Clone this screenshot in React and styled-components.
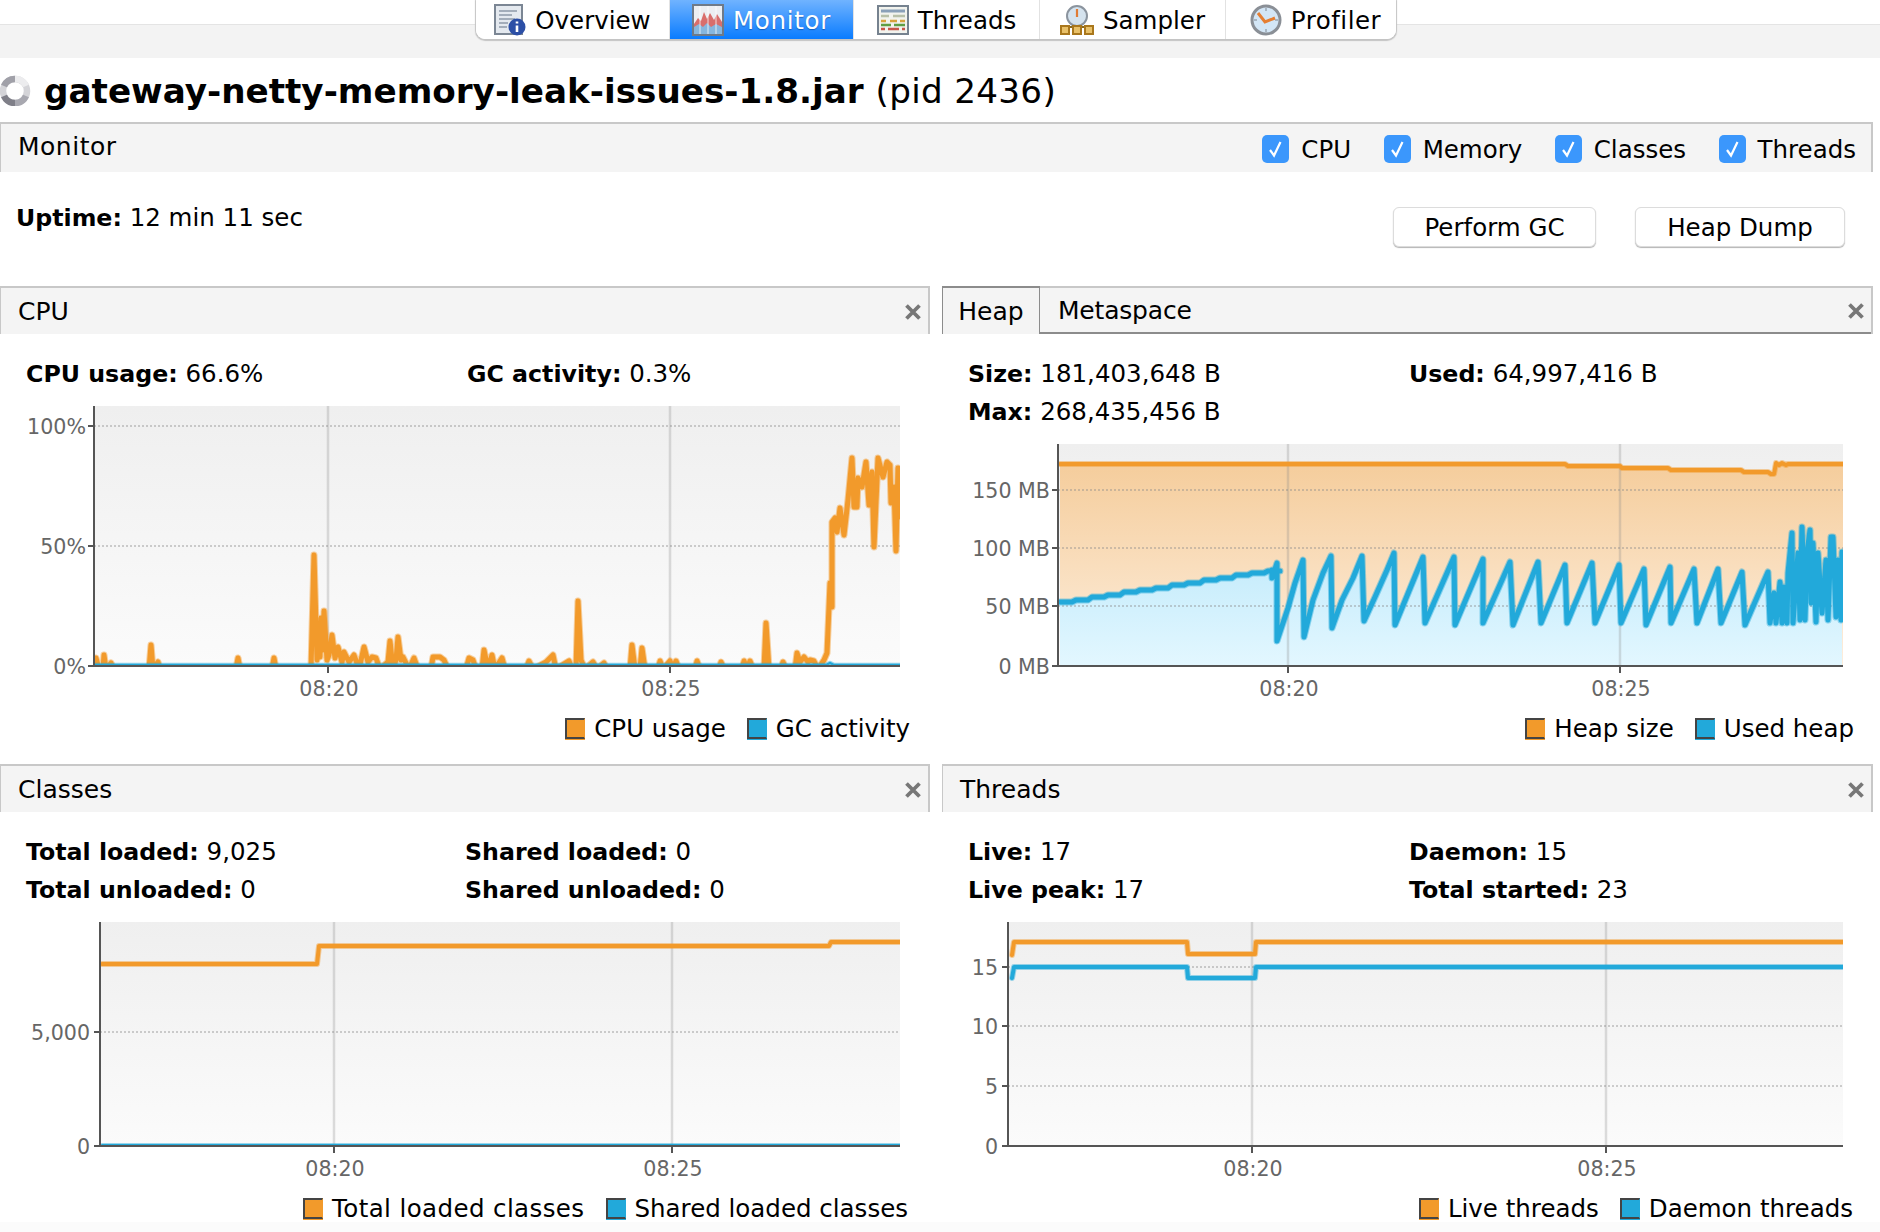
import React from 'react';
import styled, { createGlobalStyle } from 'styled-components';

const ORANGE = '#f29a2b';
const BLUE = '#22a9da';
const FONT = '"DejaVu Sans", "Liberation Sans", sans-serif';

const GlobalStyle = createGlobalStyle`
  html, body {
    margin: 0;
    padding: 0;
    background: #fff;
  }
  body {
    font-family: ${FONT};
    color: #000;
  }
`;

const Page = styled.div`
  width: 1880px;
  height: 1232px;
  overflow: hidden;
  background: linear-gradient(#fff 1222px, #fbfbfb 1222px);
`;

const TabStrip = styled.div`
  height: 58px;
  padding-left: 476px;
  box-sizing: border-box;
  background: linear-gradient(#fff 24px, #e4e4e4 24px, #e4e4e4 25px, #f3f3f3 25px);
`;

const TabGroup = styled.div`
  display: inline-flex;
  height: 39px;
  background: #fff;
  border-radius: 0 0 9px 9px;
  box-shadow: 0 1px 1px 1px #c4c4c4;
  overflow: hidden;
`;

const Tab = styled.div`
  width: ${(p) => p.$width}px;
  display: flex;
  align-items: center;
  justify-content: center;
  gap: 9px;
  font-size: 24.5px;
  letter-spacing: ${(p) => p.$spacing || 0}px;
  padding-left: ${(p) => p.$pad || 0}px;
  box-sizing: border-box;
  border-right: 1px solid ${(p) => (p.$last ? 'transparent' : '#e2e2e2')};
  color: ${(p) => (p.$active ? '#fff' : '#000')};
  background: ${(p) => (p.$active ? 'linear-gradient(#70b3ff, #0a7cff)' : '#fff')};
  text-shadow: ${(p) => (p.$active ? '0 1px 1px rgba(0,50,120,.5)' : 'none')};
`;

const TabLabel = styled.span`
  position: relative;
  top: 1px;
`;

const TitleRow = styled.div`
  height: 64px;
  display: flex;
  align-items: center;
  gap: 12px;
`;

const Title = styled.h1`
  margin: 0;
  font-size: 34.2px;
  font-weight: 700;
  white-space: pre;
  position: relative;
  top: 1px;

  span {
    font-weight: 400;
    letter-spacing: 0.3px;
  }
`;

const Content = styled.div`
  width: 1873px;
`;

const SectionBar = styled.div`
  height: ${(p) => p.$height || 48}px;
  box-sizing: border-box;
  display: flex;
  align-items: center;
  justify-content: space-between;
  padding-left: 17px;
  background: #f4f4f4;
  border-top: 2px solid #c8c8c8;
  border-left: 1px solid #c8c8c8;
  border-right: 2px solid #c8c8c8;
  font-size: 25px;
`;

const MonitorTitle = styled.span`
  letter-spacing: 0.5px;
  position: relative;
  top: -2px;
`;

const Toggles = styled.div`
  display: flex;
  align-items: center;
  padding-right: 15px;
  padding-top: 2px;
`;

const Toggle = styled.label`
  display: flex;
  align-items: center;
  gap: 12px;
  margin-left: 32.5px;
  font-size: 24.5px;
`;

const CheckBox = styled.span`
  width: 27px;
  height: 28px;
  border-radius: 5px;
  background: #3b97fc;
  display: flex;
  align-items: center;
  justify-content: center;
`;

const Actions = styled.div`
  height: 114px;
  display: flex;
  justify-content: space-between;
  padding: 34px 28px 0 16px;
  box-sizing: border-box;
`;

const Uptime = styled.div`
  font-size: 24.5px;
  line-height: 24px;

  b {
    font-weight: 700;
    font-size: 23.7px;
  }
`;

const Buttons = styled.div`
  display: flex;
  gap: 39px;
  height: 40px;
  margin-top: 1px;
`;

const Button = styled.button`
  width: ${(p) => p.$width}px;
  height: 40px;
  padding: 0;
  font-family: ${FONT};
  font-size: 24.5px;
  color: #000;
  background: #fff;
  border: 1px solid #dcdcdc;
  border-radius: 6px;
  box-shadow: 0 1px 1px #b4b4b4;
`;

const PanelGrid = styled.div`
  display: grid;
  grid-template-columns: 930px 931px;
  grid-template-rows: 478px 468px;
  column-gap: 12px;
`;

const Panel = styled.section`
  display: flex;
  flex-direction: column;
`;

const PanelTitle = styled.span``;

const PanelTabs = styled.div`
  display: flex;
  align-items: stretch;
  align-self: stretch;
  flex: 1;
  margin: -2px 0 0 -18px;
`;

const ActiveTab = styled.div`
  width: 98px;
  display: flex;
  align-items: center;
  justify-content: center;
  box-sizing: border-box;
  border: 1px solid #8c8c8c;
  border-top-width: 2px;
  border-bottom: none;
`;

const IdleTab = styled.div`
  flex: 1;
  display: flex;
  align-items: center;
  justify-content: space-between;
  padding: 2px 0 0 18px;
  border-bottom: 2px solid #8c8c8c;
  letter-spacing: -0.2px;
`;

const CloseButton = styled.span`
  display: flex;
  width: 18px;
  height: 18px;
  margin: 2px 6px 0 0;
  flex: none;
`;

const Stats = styled.div`
  display: grid;
  grid-template-columns: ${(p) => p.$column || 441}px auto;
  grid-auto-rows: 38px;
  align-items: center;
  padding: 20px 0 0 26px;
  font-size: 24.5px;

  b {
    font-weight: 700;
    font-size: 23.7px;
  }
`;

const Legend = styled.div`
  height: 44px;
  display: flex;
  align-items: center;
  justify-content: flex-end;
  padding-right: ${(p) => p.$right}px;
  font-size: 24.5px;
`;

const LegendItem = styled.span`
  display: flex;
  align-items: center;
  gap: 9px;
  margin-left: 21px;
  letter-spacing: ${(p) => p.$spacing || 0}px;
`;

const Swatch = styled.i`
  width: 20px;
  height: 21px;
  box-sizing: border-box;
  background: ${(p) => p.$color};
  border: 2px solid #444;
  border-right: 1px solid ${(p) => p.$color};
  box-shadow: 0 1px 0 ${(p) => p.$color};
`;

const ChartFrame = styled.svg`
  display: block;
  flex: none;

  text {
    font-family: ${FONT};
    font-size: 20.6px;
    fill: #666;
  }
`;

const toPath = (pts) => pts.map((p, i) => `${i ? 'L' : 'M'}${p[0]} ${p[1]}`).join(' ');

const toArea = (pts, base) =>
  `${toPath(pts)} L${pts[pts.length - 1][0]} ${base} L${pts[0][0]} ${base} Z`;

// 664 is the idle level of the trace, it sits behind the GC line and the axis
const cpuPoints = [
  [95, 664], [96, 658], [99, 664], [103, 664], [104, 655], [106, 664], [111, 663], [114, 664],
  [149, 664], [151, 645], [153, 664], [158, 662], [160, 664], [236, 664], [238, 658], [240, 664],
  [272, 664], [274, 658], [276, 664], [311, 664], [314, 555], [317, 660], [319, 640], [320, 657],
  [321, 618], [323, 650], [324, 611], [327, 660], [329, 655], [332, 635], [335, 658], [338, 647],
  [342, 662], [344, 652], [349, 662], [354, 655], [359, 664], [364, 647], [368, 662], [372, 657],
  [376, 658], [380, 664], [388, 662], [390, 641], [393, 664], [396, 660], [398, 637], [401, 660],
  [403, 657], [409, 664], [414, 658], [418, 664], [423, 664], [431, 664], [433, 657], [440, 657],
  [444, 660], [448, 664], [466, 664], [469, 658], [473, 660], [476, 664], [482, 664], [484, 650],
  [488, 664], [492, 655], [495, 664], [502, 658], [505, 664], [526, 664], [529, 661], [533, 664],
  [546, 662], [550, 658], [553, 655], [556, 664], [569, 661], [572, 664], [576, 664], [578, 601],
  [581, 660], [585, 664], [593, 662], [597, 664], [604, 663], [607, 664], [614, 664], [630, 664],
  [632, 645], [635, 664], [640, 664], [642, 648], [645, 664], [658, 664], [660, 661], [663, 664],
  [670, 661], [673, 664], [676, 661], [679, 664], [695, 664], [697, 661], [700, 664], [719, 664],
  [721, 662], [724, 664], [742, 664], [744, 661], [747, 664], [750, 661], [753, 664], [762, 664],
  [764, 664], [766, 623], [769, 664], [781, 664], [783, 662], [786, 664], [795, 664], [797, 653],
  [800, 662], [804, 657], [808, 662], [810, 660], [814, 661], [818, 664], [824, 660], [827, 653],
  [830, 583], [832, 607], [832, 522], [835, 518], [837, 532], [840, 508], [844, 535], [848, 500],
  [852, 458], [854, 507], [857, 507], [858, 478], [862, 487], [866, 462], [869, 505], [872, 472],
  [874, 547], [878, 458], [883, 477], [887, 462], [890, 465], [891, 503], [894, 487], [896, 551],
  [898, 468], [899, 517],
].map(([x, y]) => [x, y === 664 ? 669 : y]);

const gcPoints = [[94, 665], [826, 665], [830, 663], [834, 665], [900, 665]];

const heapSizePoints = [
  [1060, 464], [1565, 464], [1568, 466], [1620, 466], [1622, 468], [1668, 468], [1671, 470],
  [1741, 470], [1744, 472], [1768, 472], [1771, 474], [1774, 474], [1776, 463], [1779, 465],
  [1782, 463], [1786, 465], [1788, 464], [1843, 464],
];

const teeth = [
  [1277, 641], [1288, 608], [1295, 583], [1303, 560], [1304, 637], [1313, 600], [1323, 573],
  [1331, 556], [1332, 628], [1342, 600], [1353, 578], [1362, 556], [1364, 621], [1375, 597],
  [1387, 570], [1394, 553], [1395, 625], [1423, 557], [1425, 623], [1454, 557], [1455, 625],
  [1483, 559], [1483, 623], [1510, 562], [1513, 625], [1538, 562], [1541, 623], [1565, 565],
  [1567, 623], [1592, 563], [1595, 623], [1619, 565], [1621, 623], [1644, 569], [1646, 625],
  [1670, 567], [1671, 623], [1694, 569], [1697, 623], [1718, 569], [1721, 623], [1742, 572],
  [1745, 625], [1768, 572], [1770, 623], [1774, 593], [1776, 623], [1780, 582], [1782, 623],
  [1784, 587], [1787, 623], [1788, 573], [1792, 533], [1793, 623], [1798, 553], [1800, 620],
  [1802, 527], [1805, 620], [1807, 553], [1810, 530], [1811, 603], [1813, 543], [1816, 622],
  [1818, 553], [1822, 613], [1826, 560], [1828, 620], [1831, 537], [1833, 537], [1836, 617],
  [1838, 560], [1841, 620], [1842, 552],
];

const ramp = [];
for (let x = 1060; x < 1270; x += 16) {
  const y = Math.round(602 - ((x - 1060) * 32) / 212);
  ramp.push([x, y], [x + 12, y]);
}

const usedHeapPoints = [...ramp, [1272, 570], [1272, 578], [1277, 563], ...teeth];

const PlotGradient = ({ id, top, bottom, from, to }) => (
  <linearGradient id={id} gradientUnits="userSpaceOnUse" x1="0" x2="0" y1={top} y2={bottom}>
    <stop offset="0" stopColor={from} />
    <stop offset="1" stopColor={to} />
  </linearGradient>
);

const Series = ({ points, color, width = 4 }) => (
  <g fill="none" strokeLinejoin="round" strokeLinecap="round">
    <path d={toPath(points)} stroke={color} strokeOpacity=".45" strokeWidth={width + 2} />
    <path d={toPath(points)} stroke={color} strokeWidth={width} />
  </g>
);

// coordinates are page coordinates, the viewBox moves them into the panel
const Chart = ({ id, originX, originY, height, plot, yTicks, xTicks, labelY, labelRight, under, children }) => (
  <ChartFrame
    width="930"
    height={height}
    viewBox={`${originX} ${originY} 930 ${height}`}
  >
    <defs>
      <PlotGradient id={`${id}-bg`} top={plot.top} bottom={plot.bottom} from="#efefef" to="#fbfbfb" />
      <clipPath id={`${id}-clip`}>
        <rect x={plot.left} y={plot.top} width={plot.right - plot.left} height={plot.bottom - plot.top + 1} />
      </clipPath>
    </defs>
    <rect x={plot.left} y={plot.top} width={plot.right - plot.left} height={plot.bottom - plot.top} fill={`url(#${id}-bg)`} />
    <g clipPath={`url(#${id}-clip)`}>
      {under}
      {yTicks.map((t) => (
        <line key={t.label} x1={plot.left} x2={plot.right} y1={t.y} y2={t.y} stroke="#8a8a8a" strokeOpacity=".4" strokeWidth="2" strokeDasharray="2 2" />
      ))}
      {xTicks.map((t) => (
        <line key={t.label} x1={t.x} x2={t.x} y1={plot.top} y2={plot.bottom} stroke="#8a8a8a" strokeOpacity=".28" strokeWidth="2.5" />
      ))}
      {children}
    </g>
    <path
      d={`M${plot.left} ${plot.top} V${plot.bottom} H${plot.right}`}
      fill="none"
      stroke="#555"
      strokeWidth="2"
    />
    {yTicks.map((t) => (
      <g key={t.label}>
        <line x1={plot.left - 6} x2={plot.left} y1={t.y} y2={t.y} stroke="#555" strokeWidth="2" />
        <text x={labelRight} y={t.y + 8} textAnchor="end">{t.label}</text>
      </g>
    ))}
    {xTicks.map((t) => (
      <g key={t.label}>
        <line x1={t.x} x2={t.x} y1={plot.bottom} y2={plot.bottom + 7} stroke="#555" strokeWidth="2" />
        <text x={t.x + 1} y={labelY} textAnchor="middle">{t.label}</text>
      </g>
    ))}
  </ChartFrame>
);

const CloseIcon = () => (
  <CloseButton>
    <svg width="18" height="18" viewBox="0 0 18 18">
      <path d="M2.5 2.5 L15.5 15.5 M15.5 2.5 L2.5 15.5" stroke="#777" strokeWidth="3.8" />
    </svg>
  </CloseButton>
);

const CheckMark = () => (
  <svg width="15" height="18" viewBox="0 0 15 18">
    <path d="M2 10 L6 15.5 L12.5 2" fill="none" stroke="#fff" strokeWidth="2.2" />
  </svg>
);

const Spinner = () => (
  <svg width="32" height="32" viewBox="0 0 32 32" fill="none" strokeWidth="6.5">
    <circle cx="15" cy="17" r="12" stroke="#d4d4d8" />
    <path d="M4 22 A12 12 0 0 0 15 29" stroke="#7f7f88" />
    <path d="M15 29 A12 12 0 0 0 26 22" stroke="#a8a8b0" />
    <path d="M4 12 A12 12 0 0 1 15 5" stroke="#a0a0a8" />
    <path d="M15 5 A12 12 0 0 1 26 12" stroke="#ececee" />
  </svg>
);

const OverviewIcon = () => (
  <svg width="32" height="32" viewBox="0 0 32 32">
    <rect x="1" y="1" width="27" height="29" fill="#e4e9ef" stroke="#7b8694" strokeWidth="2" />
    <path d="M5 7 H23 M5 11 H18 M5 15 H21 M5 19 H14 M5 23 H13" stroke="#a3adba" strokeWidth="2" />
    <circle cx="23" cy="23" r="8.5" fill="#2c4fa6" />
    <path d="M23 21.5 V28 M23 17.5 V19.5" stroke="#fff" strokeWidth="2.6" />
  </svg>
);

const MonitorIcon = () => (
  <svg width="32" height="32" viewBox="0 0 32 32">
    <rect x="1" y="1" width="30" height="30" fill="#eceef2" stroke="#6f7a88" strokeWidth="2" />
    <path d="M2 20 L6 14 L9 17 L12 8 L15 15 L18 9 L22 16 L25 10 L30 18 V23 H2 Z" fill="#d96e6c" />
    <path d="M2 23 L7 20 L11 23 L15 19 L19 23 L24 20 L30 23 V30 H2 Z" fill="#86b6de" />
    <path d="M8 2 V30 M16 2 V30 M24 2 V30" stroke="#fff" strokeOpacity=".5" strokeWidth="1.5" />
  </svg>
);

const ThreadsIcon = () => (
  <svg width="32" height="30" viewBox="0 0 32 30">
    <rect x="1" y="1" width="30" height="28" fill="#f2f3ee" stroke="#76828f" strokeWidth="2" />
    <path d="M4 6 H28" stroke="#8aa0b8" strokeWidth="3" />
    <path d="M4 11 H12 M16 11 H28" stroke="#b8c0a8" strokeWidth="2.5" />
    <path d="M4 16 H9 M13 16 H20 M23 16 H28" stroke="#d8a33c" strokeWidth="2.5" />
    <path d="M4 20 H14 M17 20 H28" stroke="#5f9e45" strokeWidth="2.5" />
    <path d="M4 24 H8 M11 24 H22 M25 24 H28" stroke="#c8574a" strokeWidth="2.5" />
  </svg>
);

const SamplerIcon = () => (
  <svg width="34" height="30" viewBox="0 0 34 30">
    <circle cx="17" cy="11" r="10" fill="#d5e3ee" stroke="#8b949e" strokeWidth="2" />
    <path d="M17 4 V12" stroke="#e07b35" strokeWidth="2.2" />
    <path d="M5 22 H29" stroke="#8a6a20" strokeWidth="2" />
    <g fill="#e8c068" stroke="#a9771c" strokeWidth="2">
      <rect x="1" y="21" width="8" height="8" />
      <rect x="13" y="21" width="8" height="8" />
      <rect x="25" y="21" width="8" height="8" />
    </g>
  </svg>
);

const ProfilerIcon = () => (
  <svg width="32" height="32" viewBox="0 0 32 32">
    <circle cx="16" cy="16" r="14" fill="#d3e6f6" stroke="#8a8f96" strokeWidth="3" />
    <path d="M8 9 L15 18 L25 14" fill="none" stroke="#e57f33" strokeWidth="3" />
    <path d="M16 4 V7 M16 25 V28 M4 16 H7 M25 16 H28" stroke="#9aa7b3" strokeWidth="1.5" />
  </svg>
);

const tabs = [
  { label: 'Overview', width: 194, Icon: OverviewIcon },
  { label: 'Monitor', width: 184, Icon: MonitorIcon, active: true, spacing: 0.7 },
  { label: 'Threads', width: 186, Icon: ThreadsIcon },
  { label: 'Sampler', width: 186, Icon: SamplerIcon },
  { label: 'Profiler', width: 170, Icon: ProfilerIcon, spacing: 0.5, pad: 10 },
];

const Stat = ({ name, value }) => (
  <span>
    <b>{name}:</b> {value}
  </span>
);

const LegendRow = ({ first, second, right, spacing }) => (
  <Legend $right={right}>
    <LegendItem $spacing={spacing}><Swatch $color={ORANGE} />{first}</LegendItem>
    <LegendItem><Swatch $color={BLUE} />{second}</LegendItem>
  </Legend>
);

const App = () => (
  <Page>
    <GlobalStyle />
    <TabStrip>
      <TabGroup>
        {tabs.map(({ label, width, Icon, active, spacing, pad }, i) => (
          <Tab key={label} $width={width} $active={active} $spacing={spacing} $pad={pad} $last={i === tabs.length - 1}>
            <Icon />
            <TabLabel>{label}</TabLabel>
          </Tab>
        ))}
      </TabGroup>
    </TabStrip>

    <TitleRow>
      <Spinner />
      <Title>gateway-netty-memory-leak-issues-1.8.jar <span>(pid 2436)</span></Title>
    </TitleRow>

    <Content>
      <SectionBar $height={50}>
        <MonitorTitle>Monitor</MonitorTitle>
        <Toggles>
          {['CPU', 'Memory', 'Classes', 'Threads'].map((name) => (
            <Toggle key={name}>
              <CheckBox><CheckMark /></CheckBox>
              {name}
            </Toggle>
          ))}
        </Toggles>
      </SectionBar>

      <Actions>
        <Uptime><b>Uptime:</b> 12 min 11 sec</Uptime>
        <Buttons>
          <Button $width={203}>Perform GC</Button>
          <Button $width={210}>Heap Dump</Button>
        </Buttons>
      </Actions>

      <PanelGrid>
        <Panel>
          <SectionBar>
            <PanelTitle>CPU</PanelTitle>
            <CloseIcon />
          </SectionBar>
          <Stats>
            <Stat name="CPU usage" value="66.6%" />
            <Stat name="GC activity" value="0.3%" />
          </Stats>
          <Chart
            id="cpu"
            originX={0}
            originY={392}
            height={314}
            plot={{ left: 94, right: 900, top: 406, bottom: 666 }}
            yTicks={[{ y: 426, label: '100%' }, { y: 546, label: '50%' }, { y: 666, label: '0%' }]}
            xTicks={[{ x: 328, label: '08:20' }, { x: 670, label: '08:25' }]}
            labelY={696}
            labelRight={86}
          >
            <Series points={cpuPoints} color={ORANGE} width={5} />
            <Series points={gcPoints} color={BLUE} width={2.5} />
          </Chart>
          <LegendRow first="CPU usage" second="GC activity" right={20} />
        </Panel>

        <Panel>
          <SectionBar>
            <PanelTabs>
              <ActiveTab>Heap</ActiveTab>
              <IdleTab>
                Metaspace
                <CloseIcon />
              </IdleTab>
            </PanelTabs>
          </SectionBar>
          <Stats>
            <Stat name="Size" value="181,403,648 B" />
            <Stat name="Used" value="64,997,416 B" />
            <Stat name="Max" value="268,435,456 B" />
          </Stats>
          <Chart
            id="heap"
            originX={942}
            originY={430}
            height={276}
            plot={{ left: 1058, right: 1843, top: 444, bottom: 666 }}
            yTicks={[
              { y: 490, label: '150 MB' },
              { y: 548, label: '100 MB' },
              { y: 606, label: '50 MB' },
              { y: 666, label: '0 MB' },
            ]}
            xTicks={[{ x: 1288, label: '08:20' }, { x: 1620, label: '08:25' }]}
            labelY={696}
            labelRight={1050}
            under={
              <>
                <defs>
                  <PlotGradient id="heap-size" top={464} bottom={666} from="#f5cd9c" to="#fdeedd" />
                  <PlotGradient id="heap-used" top={555} bottom={666} from="#c3ebfb" to="#e3f7ff" />
                </defs>
                <path d={toArea(heapSizePoints, 666)} fill="url(#heap-size)" />
                <path d={toArea(usedHeapPoints, 666)} fill="url(#heap-used)" />
              </>
            }
          >
            <Series points={heapSizePoints} color={ORANGE} />
            <Series points={usedHeapPoints} color={BLUE} width={5} />
          </Chart>
          <LegendRow first="Heap size" second="Used heap" right={19} />
        </Panel>

        <Panel>
          <SectionBar>
            <PanelTitle>Classes</PanelTitle>
            <CloseIcon />
          </SectionBar>
          <Stats $column={439}>
            <Stat name="Total loaded" value="9,025" />
            <Stat name="Shared loaded" value="0" />
            <Stat name="Total unloaded" value="0" />
            <Stat name="Shared unloaded" value="0" />
          </Stats>
          <Chart
            id="classes"
            originX={0}
            originY={908}
            height={278}
            plot={{ left: 100, right: 900, top: 922, bottom: 1146 }}
            yTicks={[{ y: 1032, label: '5,000' }, { y: 1146, label: '0' }]}
            xTicks={[{ x: 334, label: '08:20' }, { x: 672, label: '08:25' }]}
            labelY={1176}
            labelRight={90}
          >
            <Series
              points={[[102, 964], [317, 964], [319, 946], [829, 946], [831, 942], [900, 942]]}
              color={ORANGE}
            />
            <Series points={[[102, 1145], [900, 1145]]} color={BLUE} width={2} />
          </Chart>
          <LegendRow first="Total loaded classes" second="Shared loaded classes" right={22} spacing={0.4} />
        </Panel>

        <Panel>
          <SectionBar>
            <PanelTitle>Threads</PanelTitle>
            <CloseIcon />
          </SectionBar>
          <Stats>
            <Stat name="Live" value="17" />
            <Stat name="Daemon" value="15" />
            <Stat name="Live peak" value="17" />
            <Stat name="Total started" value="23" />
          </Stats>
          <Chart
            id="threads"
            originX={942}
            originY={908}
            height={278}
            plot={{ left: 1008, right: 1843, top: 922, bottom: 1146 }}
            yTicks={[
              { y: 967, label: '15' },
              { y: 1026, label: '10' },
              { y: 1086, label: '5' },
              { y: 1146, label: '0' },
            ]}
            xTicks={[{ x: 1252, label: '08:20' }, { x: 1606, label: '08:25' }]}
            labelY={1176}
            labelRight={998}
          >
            <Series
              points={[[1012, 955], [1014, 942], [1187, 942], [1188, 954], [1255, 954], [1256, 942], [1843, 942]]}
              color={ORANGE}
            />
            <Series
              points={[[1012, 978], [1014, 967], [1187, 967], [1188, 978], [1255, 978], [1256, 967], [1843, 967]]}
              color={BLUE}
            />
          </Chart>
          <LegendRow first="Live threads" second="Daemon threads" right={20} />
        </Panel>
      </PanelGrid>
    </Content>
  </Page>
);

export default App;
